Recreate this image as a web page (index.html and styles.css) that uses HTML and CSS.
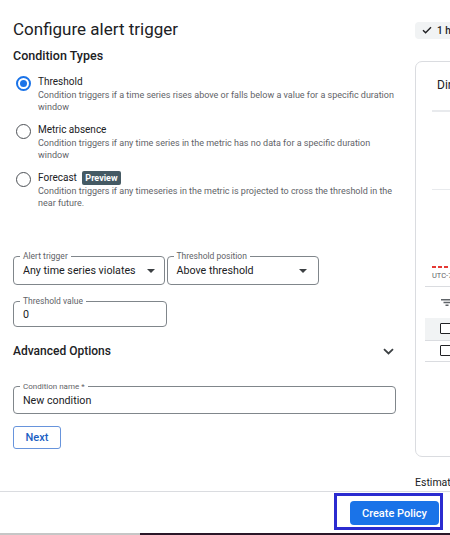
FILE: index.html
```html
<!DOCTYPE html>
<html lang="en">
<head>
<meta charset="utf-8">
<title>Configure alert trigger</title>
<link rel="stylesheet" href="styles.css">
</head>
<body>
<div class="page">
  <div class="main">
    <section class="left">
      <h1 class="title">Configure alert trigger</h1>
      <h2 class="section-title">Condition Types</h2>
      <div class="options">
        <div class="option">
          <span class="radio checked"></span>
          <div class="option-body">
            <div class="option-title">Threshold</div>
            <div class="option-desc">Condition triggers if a time series rises above or falls below a value for a specific duration<br>window</div>
          </div>
        </div>
        <div class="option">
          <span class="radio"></span>
          <div class="option-body">
            <div class="option-title">Metric absence</div>
            <div class="option-desc">Condition triggers if any time series in the metric has no data for a specific duration<br>window</div>
          </div>
        </div>
        <div class="option">
          <span class="radio"></span>
          <div class="option-body">
            <div class="option-title">Forecast <span class="badge">Preview</span></div>
            <div class="option-desc">Condition triggers if any timeseries in the metric is projected to cross the threshold in the<br>near future.</div>
          </div>
        </div>
      </div>

      <div class="fields-row">
        <fieldset class="field field-a">
          <legend>Alert trigger</legend>
          <div class="field-value"><span>Any time series violates</span><span class="caret"></span></div>
        </fieldset>
        <fieldset class="field field-b">
          <legend>Threshold position</legend>
          <div class="field-value"><span>Above threshold</span><span class="caret"></span></div>
        </fieldset>
      </div>

      <fieldset class="field field-c">
        <legend>Threshold value</legend>
        <div class="field-value"><span>0</span></div>
      </fieldset>

      <div class="advanced">
        <span>Advanced Options</span>
        <svg class="chevron" width="11" height="7" viewBox="0 0 11 7"><path d="M1 1.2 L5.5 5.5 L10 1.2" fill="none" stroke="#3c4043" stroke-width="1.8"/></svg>
      </div>

      <fieldset class="field field-d">
        <legend>Condition name *</legend>
        <div class="field-value"><span>New condition</span></div>
      </fieldset>

      <button class="btn-next" type="button">Next</button>
    </section>

    <aside class="right">
      <div class="chip">
        <svg width="10" height="8" viewBox="0 0 10 8"><path d="M1 4.2 L3.6 6.8 L9 1.2" fill="none" stroke="#202124" stroke-width="1.4"/></svg>
        <span>1 hour</span>
      </div>
      <div class="card">
        <div class="card-head">Direct view</div>
        <div class="card-rule thick"></div>
        <div class="card-rule thin"></div>
        <div class="threshold-line"></div>
        <div class="utc">UTC-7</div>
        <div class="table">
          <div class="toolbar">
            <svg width="12" height="7" viewBox="0 0 12 7"><path d="M0 0.75 H12 M2.5 3.5 H9.5 M4.5 6.25 H7.5" stroke="#5f6368" stroke-width="1.3"/></svg>
          </div>
          <div class="trow shaded"><span class="checkbox"></span></div>
          <div class="trow"><span class="checkbox"></span></div>
        </div>
      </div>
      <div class="estimate">Estimated monthly cost</div>
    </aside>
  </div>

  <footer class="footer">
    <div class="focus-ring">
      <button class="btn-primary" type="button">Create Policy</button>
    </div>
  </footer>
  <div class="strip"><span class="strip-a"></span><span class="strip-b"></span></div>
</div>
</body>
</html>
```

FILE: styles.css
```css
* { box-sizing: border-box; }

html, body {
  margin: 0;
  padding: 0;
  background: #ffffff;
}

body {
  font-family: Roboto, "Liberation Sans", Arial, sans-serif;
  color: #202124;
}

.page {
  width: 450px;
  height: 535px;
  overflow: hidden;
  display: flex;
  flex-direction: column;
}

.main {
  height: 491px;
  display: flex;
  flex: none;
}

.left {
  width: 415px;
  flex: none;
  padding: 17px 19px 0 13px;
}

.title {
  margin: 0;
  font-size: 17px;
  line-height: 24px;
  font-weight: 400;
  color: #202124;
}

.section-title {
  margin: 7px 0 0;
  font-size: 12.5px;
  line-height: 16px;
  font-weight: 500;
  color: #202124;
}

.options {
  margin-top: 11px;
  display: flex;
  flex-direction: column;
  gap: 10px;
}

.option {
  display: flex;
  align-items: flex-start;
  height: 38px;
}

.radio {
  flex: none;
  width: 15px;
  height: 15px;
  margin: 1px 7px 0 3px;
  border-radius: 50%;
  border: 1.6px solid #4d5156;
  display: flex;
  align-items: center;
  justify-content: center;
}

.radio.checked {
  border: 2px solid #1a73e8;
}

.radio.checked::after {
  content: "";
  width: 7px;
  height: 7px;
  border-radius: 50%;
  background: #1a73e8;
}

.option-title {
  font-size: 10px;
  line-height: 14px;
  height: 14px;
  color: #202124;
  display: flex;
  align-items: center;
  gap: 5px;
}

.badge {
  display: inline-flex;
  align-items: center;
  height: 14.5px;
  padding: 0 3.5px;
  background: #455a64;
  color: #ffffff;
  font-size: 9px;
  font-weight: 700;
  border-radius: 2px;
}

.option-desc {
  font-size: 9px;
  line-height: 12px;
  color: #5f6368;
  white-space: nowrap;
}

.fields-row {
  margin-top: 43px;
  display: flex;
  gap: 1.5px;
}

.field {
  margin: 0;
  min-width: 0;
  padding: 0 9px 6px;
  border: 1px solid #80868b;
  border-radius: 4px;
}

.field legend {
  margin-left: -3px;
  padding: 0 3px;
  font-size: 8.5px;
  line-height: 9px;
  color: #5f6368;
}

.field-a { width: 152px; }
.field-b { width: 152px; padding-right: 11px; }
.field-c { width: 154px; margin-top: 12px; padding-bottom: 4px; }
.field-d { width: 383px; margin-top: 23px; padding-bottom: 5px; }
.field-d legend { font-size: 8px; }

.field-value {
  margin-top: 2.5px;
  display: flex;
  align-items: center;
  justify-content: space-between;
  font-size: 10.7px;
  line-height: 14px;
  color: #202124;
  white-space: nowrap;
}

.caret {
  width: 0;
  height: 0;
  border-left: 4px solid transparent;
  border-right: 4px solid transparent;
  border-top: 4px solid #3c4043;
}

.advanced {
  margin-top: 16px;
  width: 383px;
  padding-right: 2px;
  display: flex;
  align-items: center;
  justify-content: space-between;
  font-size: 12px;
  line-height: 16px;
  font-weight: 500;
  color: #202124;
}

.chevron { display: block; }

.btn-next {
  display: block;
  margin-top: 12px;
  width: 48px;
  height: 23px;
  padding: 0;
  border: 1px solid #6794dc;
  border-radius: 3px;
  background: #ffffff;
  color: #1a5fc4;
  font-family: inherit;
  font-size: 11px;
  font-weight: 500;
}

.right {
  width: 300px;
  flex: none;
  padding-top: 19px;
}

.chip {
  display: inline-flex;
  align-items: center;
  gap: 5px;
  height: 17px;
  padding: 0 8px 0 7px;
  background: #f1f3f4;
  border-radius: 4px;
  font-size: 10px;
  font-weight: 500;
  color: #202124;
}

.chip svg { display: block; }

.card {
  margin-top: 22px;
  width: 280px;
  height: 396px;
  border: 1px solid #dadce0;
  border-radius: 7px;
}

.card-head {
  padding: 15px 0 0 21px;
  font-size: 12px;
  line-height: 16px;
  color: #202124;
}

.card-rule {
  margin-left: 16px;
  background: #e8eaed;
}

.card-rule.thick { margin-top: 17px; height: 2px; }
.card-rule.thin { margin-top: 77px; height: 1px; }

.threshold-line {
  margin: 76px 0 0 16px;
  height: 2px;
  background: repeating-linear-gradient(90deg, #e53935 0 4px, transparent 4px 6px);
}

.utc {
  margin-top: 3px;
  padding-left: 16px;
  font-size: 7.5px;
  line-height: 10px;
  color: #5f6368;
}

.table {
  margin: 5px 0 0 9px;
  border-top: 1px solid #dadce0;
}

.toolbar {
  height: 31px;
  padding-left: 16px;
  display: flex;
  align-items: center;
}

.toolbar svg { display: block; }

.trow {
  height: 21px;
  padding-left: 15px;
  display: flex;
  align-items: center;
  border-bottom: 1px solid #dadce0;
}

.trow.shaded {
  height: 23px;
  background: #f1f3f4;
}

.checkbox {
  width: 11px;
  height: 11px;
  border: 1.5px solid #202124;
  border-radius: 1px;
  background: #ffffff;
}

.estimate {
  margin-top: 19px;
  font-size: 10.5px;
  line-height: 14px;
  color: #202124;
  white-space: nowrap;
}

.footer {
  height: 42px;
  flex: none;
  border-top: 1px solid #dadce0;
  display: flex;
  justify-content: flex-end;
  align-items: flex-start;
  padding-right: 7px;
}

.focus-ring {
  margin-top: 1px;
  border: 3px solid #2b2bd0;
  padding: 5px 1px 2px 13px;
}

.btn-primary {
  display: block;
  width: 89px;
  height: 24px;
  padding: 0;
  border: none;
  border-radius: 4px;
  background: #1a73e8;
  color: #ffffff;
  font-family: inherit;
  font-size: 11px;
  font-weight: 500;
}

.strip {
  height: 2px;
  flex: none;
  display: flex;
}

.strip-a { width: 140px; background: #c6c6c6; }
.strip-b { flex: 1; background: #2a1729; }
```
